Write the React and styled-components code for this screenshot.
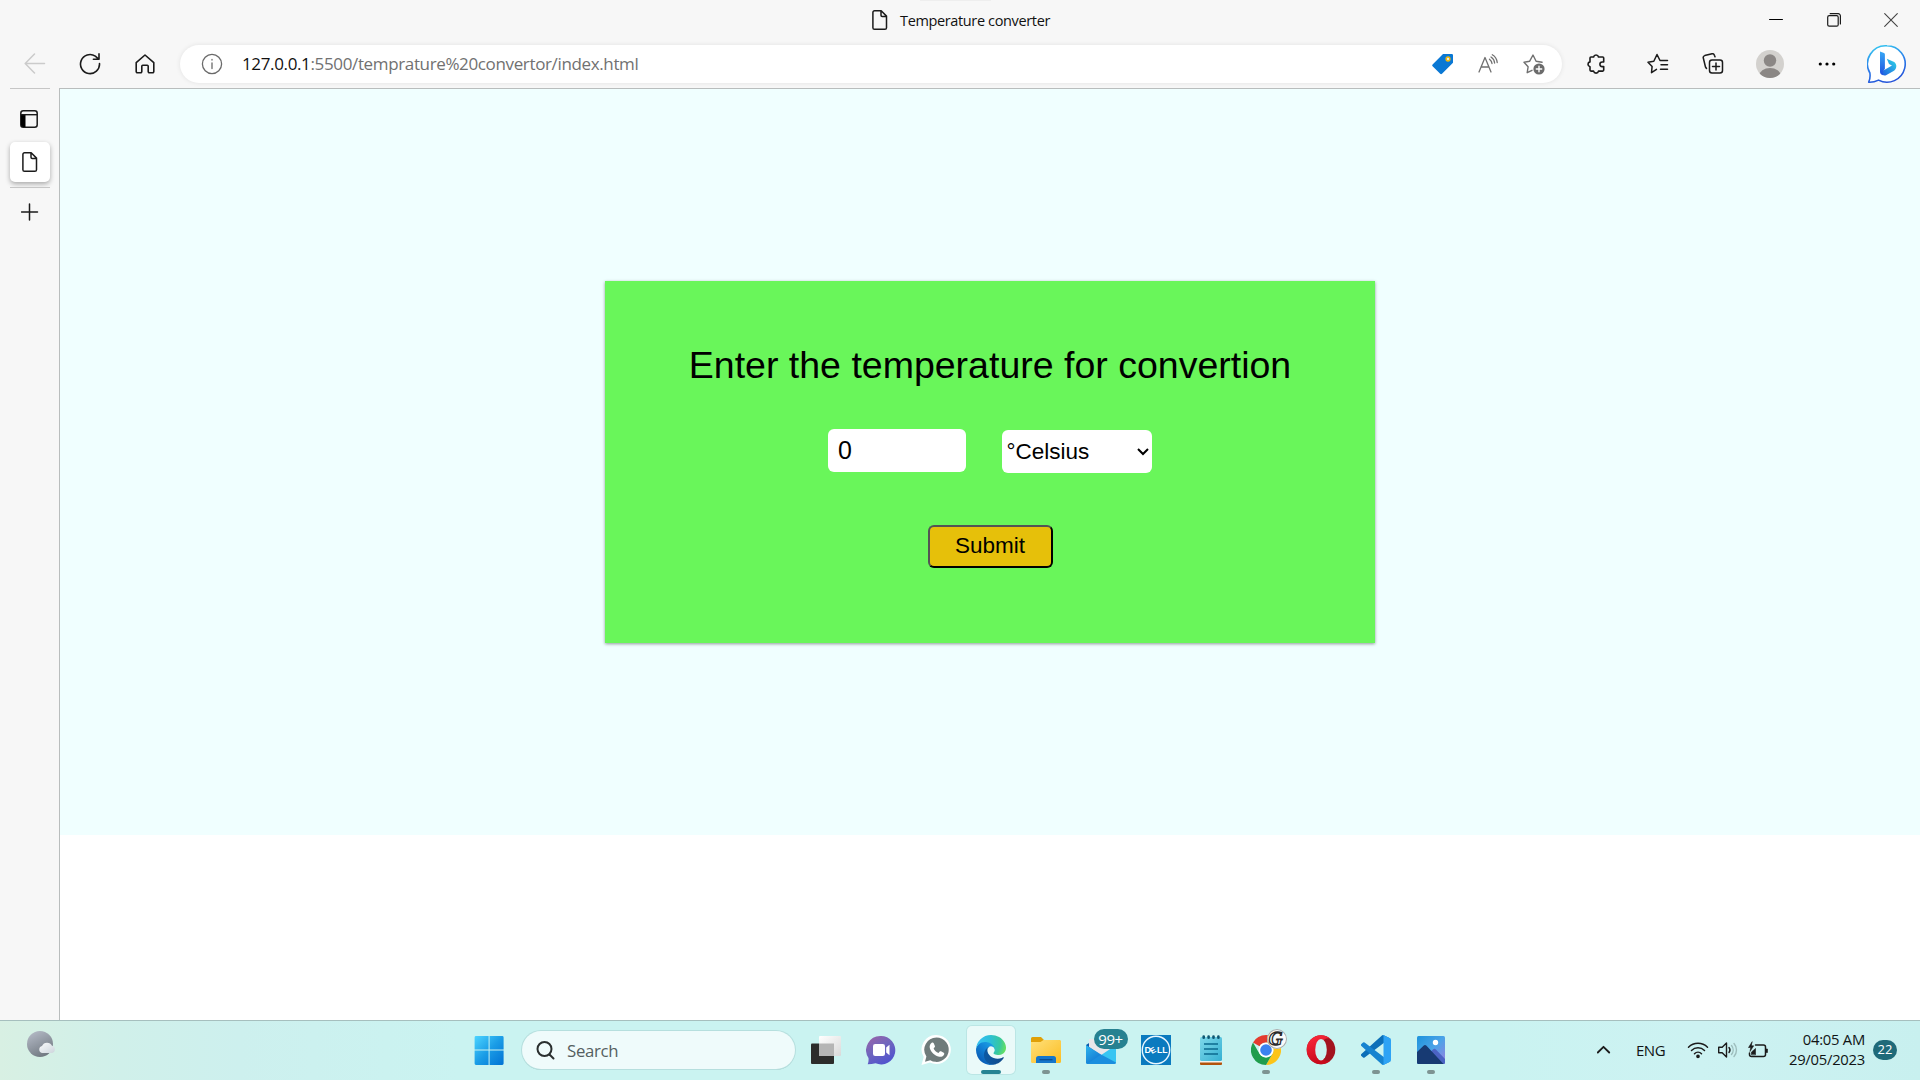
import React from "react";
import styled, { createGlobalStyle } from "styled-components";

const GlobalStyle = createGlobalStyle`
  * { box-sizing: border-box; }
  html, body { margin: 0; padding: 0; }
  body { width: 1920px; height: 1080px; overflow: hidden; background: #fff; }
  svg { display: block; flex: none; }
`;

const ui = `"Open Sans", "Noto Sans", sans-serif`;
const arial = `"Liberation Sans", Arial, sans-serif`;

const Screen = styled.div`
  width: 1920px;
  height: 1080px;
  display: flex;
  flex-direction: column;
  overflow: hidden;
  font-family: ${ui};
`;

/* ---------- browser frame ---------- */

const TitleBar = styled.header`
  height: 45px;
  flex: none;
  display: flex;
  background: linear-gradient(#eeeeee, #eeeeee) 920px 0 / 71px 1px no-repeat, #f7f7f7;
  padding-left: 871px;
`;

const PageTitle = styled.div`
  display: flex;
  align-items: center;
  gap: 11px;
  height: 40px;
  font-size: 14.5px;
  color: #111;
  white-space: nowrap;
  letter-spacing: ${(p) => p.$spacing}px;
`;

const WindowControls = styled.div`
  margin-left: auto;
  display: flex;
  height: 39px;
`;

const Slot = styled.div`
  width: ${(p) => p.$w}px;
  flex: none;
  display: flex;
  align-items: center;
  justify-content: center;
`;

const InfoSlot = styled(Slot)`
  padding-left: 2px;
`;

const Toolbar = styled.nav`
  height: 43px;
  flex: none;
  display: flex;
  background: #f7f7f7;
  padding: 0 0 5px 7px;
`;

const AddressBar = styled.div`
  width: 1382px;
  height: 38px;
  margin: 0 4px 0 8px;
  flex: none;
  display: flex;
  align-items: center;
  border-radius: 19px;
  background: #fff;
  box-shadow: 0 0 5px rgba(0, 0, 0, 0.09);
  padding-right: 5.5px;
`;

const Url = styled.div`
  flex: 1;
  font-size: 17px;
  line-height: 37px;
  height: 38px;
  color: #717171;
  white-space: nowrap;
  letter-spacing: ${(p) => p.$spacing}px;
`;

const Host = styled.span`
  color: #111;
`;

const Divider = styled.div`
  width: 2px;
  height: 20px;
  align-self: center;
  margin-right: 2px;
  background: #d2d2d2;
`;

const Middle = styled.div`
  flex: 1;
  display: flex;
  min-height: 0;
`;

const SideTabs = styled.aside`
  width: 59px;
  flex: none;
  background: #f7f7f7;
  padding: 0 9px 0 10px;
  display: flex;
  flex-direction: column;
`;

const Rule = styled.div`
  height: 1px;
  flex: none;
  background: #c6c6c6;
`;

const SideButton = styled.div`
  height: ${(p) => p.$h}px;
  flex: none;
  display: flex;
  align-items: center;
  justify-content: center;
`;

const PanelToggle = styled(SideButton)`
  padding: 7px 2px 0 0;
`;

const ActiveTab = styled(SideButton)`
  border-radius: 5px;
  background: #fff;
  box-shadow: 0 2px 5px rgba(0, 0, 0, 0.32);
  margin-bottom: 5px;
`;

const Viewport = styled.main`
  flex: 1;
  border-top: 1px solid #b9bdbd;
  border-left: 1px solid #b9bdbd;
  background: #fff;
`;

/* ---------- converter page ---------- */

const Hero = styled.section`
  height: 746px;
  background: #f0ffff;
  display: flex;
  align-items: center;
  justify-content: center;
`;

const Card = styled.form`
  width: 770px;
  height: 362px;
  background: #69f65a;
  box-shadow: 0 1px 3px rgba(0, 0, 0, 0.4);
  padding-top: 63px;
  display: flex;
  flex-direction: column;
  align-items: center;
  font-family: ${arial};
  color: #000;
`;

const Heading = styled.h1`
  margin: 0 0 42px;
  font-size: 37.5px;
  line-height: 43px;
  font-weight: 400;
  white-space: nowrap;
`;

const Fields = styled.div`
  display: flex;
  gap: 36px;
  margin-bottom: 52px;
`;

const Degrees = styled.input`
  width: 138px;
  height: 43px;
  border: 0;
  border-radius: 6px;
  padding: 0 10px;
  background: #fff;
  font: 25px ${arial};
  color: #000;
  outline: none;
`;

const UnitBox = styled.div`
  position: relative;
  width: 150px;
  height: 43px;
  margin-top: 1px;
`;

const Unit = styled.select`
  appearance: none;
  width: 100%;
  height: 100%;
  border: 0;
  border-radius: 6px;
  padding: 0 0 1px 4.5px;
  background: #fff;
  font: 22.5px ${arial};
  color: #000;
`;

const Chevron = styled.svg`
  position: absolute;
  right: 3px;
  top: 17px;
  pointer-events: none;
`;

const Submit = styled.button`
  width: 125px;
  height: 43px;
  padding: 0 0 1px;
  border: 2px solid;
  border-color: #545454 #000 #000 #545454;
  border-radius: 6px;
  background: #e6c00a;
  font: 22.5px ${arial};
  color: #000;
`;

/* ---------- taskbar ---------- */

const Taskbar = styled.footer`
  height: 60px;
  flex: none;
  display: flex;
  border-top: 1px solid #a6bfbe;
  background: linear-gradient(90deg, #d8f0e3 0, #d0f0ea 120px, #cdf0ee 240px, #caf3f1 460px, #caf3f1 1500px, #cdf2f2 1700px, #c8f0ef 1920px);
`;

const Weather = styled.div`
  width: 461px;
  flex: none;
  padding: 10px 0 0 26px;
`;

const AppSlot = styled.div`
  width: 55px;
  height: 48px;
  margin-top: 5px;
  flex: none;
  display: flex;
  justify-content: center;
`;

const Tile = styled.div`
  position: relative;
  width: 48px;
  height: 48px;
  padding-top: 9px;
  border-radius: 5px;
  display: flex;
  flex-direction: column;
  align-items: center;
  gap: 5px;
  background: ${(p) => (p.$active ? "rgba(255,255,255,0.6)" : "transparent")};
  box-shadow: ${(p) => (p.$active ? "0 0 0 1px rgba(160,205,205,0.35)" : "none")};
`;

const Indicator = styled.div`
  width: ${(p) => (p.$active ? 20 : 8)}px;
  height: 4px;
  border-radius: 2px;
  background: ${(p) => (p.$active ? "#268493" : "#7d9392")};
`;

const Count = styled.span`
  position: absolute;
  left: 17px;
  top: 3px;
  width: 34px;
  height: 20px;
  border-radius: 10px;
  background: #268191;
  color: #fff;
  font-size: 15px;
  line-height: 20px;
  letter-spacing: -0.4px;
  text-align: center;
`;

const ProfileBadge = styled.span`
  position: absolute;
  left: 25px;
  top: 3px;
  width: 20px;
  height: 20px;
  border-radius: 50%;
  background: #fafafa;
  box-shadow: inset 0 0 0 1px #a5aeae;
  color: #fff;
  -webkit-text-stroke: 1.3px #2a2a2a;
  font: italic 700 19px/19px "Liberation Serif", serif;
  text-align: center;
  text-indent: -2px;
`;

const SearchBox = styled.div`
  width: 273px;
  height: 38px;
  margin: 10px 3px 0 6px;
  flex: none;
  display: flex;
  align-items: center;
  gap: 12px;
  padding-left: 14px;
  border-radius: 19px;
  background: #effbfb;
  box-shadow: 0 0 0 1px #b6dfde, 0 1px 0 0 #9fbfbe;
  font-size: 16.8px;
  letter-spacing: -0.3px;
  color: #55605f;
`;

const SearchLabel = styled.span`
  padding-top: 1px;
`;

const Tray = styled.div`
  margin-left: auto;
  display: flex;
  align-items: center;
  height: 58px;
  padding-right: 23px;
  color: #101414;
`;

const Language = styled.div`
  width: 30px;
  margin: 0 21px 0 25px;
  font-size: 15px;
  line-height: 20px;
  white-space: nowrap;
  letter-spacing: -0.5px;
`;

const TrayIcons = styled.div`
  display: flex;
  gap: 8px;
`;

const Clock = styled.div`
  width: 96px;
  text-align: right;
  font-size: 14.8px;
  line-height: 20px;
  padding-bottom: 2px;
  white-space: nowrap;
  letter-spacing: ${(p) => p.$spacing}px;
`;

const Notices = styled.div`
  width: 24px;
  height: 20px;
  margin-left: 8px;
  border-radius: 10px;
  background: #1f6a79;
  color: #fff;
  font-size: 13px;
  line-height: 19px;
  text-align: center;
`;

/* ---------- icons ---------- */

const Line = ({ w = 20, h, sw = 1.5, c = "#1b1b1b", children }) => (
  <svg width={w} height={h || w} viewBox={`0 0 ${w} ${h || w}`} fill="none" stroke={c} strokeWidth={sw} strokeLinecap="round" strokeLinejoin="round">
    {children}
  </svg>
);

const DocIcon = () => (
  <Line w={18} h={22} sw={1.5}>
    <path d="M3.5 1.8h6.7l5.3 5.3v11.6a1.6 1.6 0 0 1-1.6 1.6H3.5a1.6 1.6 0 0 1-1.6-1.6V3.4a1.6 1.6 0 0 1 1.6-1.6z M10 2v4.2a1.2 1.2 0 0 0 1.2 1.2h4.2" />
  </Line>
);

const WindowsLogo = () => (
  <svg width="30" height="30" viewBox="0 0 30 30">
    <defs>
      <linearGradient id="win" x1="0" y1="0" x2="1" y2="1" gradientUnits="objectBoundingBox">
        <stop offset="0" stopColor="#4dd4ff" />
        <stop offset=".5" stopColor="#1a9ce6" />
        <stop offset="1" stopColor="#0072d4" />
      </linearGradient>
    </defs>
    <path fill="url(#win)" d="M2 1h12.6v13.6H.6V2.4A1.4 1.4 0 0 1 2 1z M15.6 1h12.6a1.4 1.4 0 0 1 1.4 1.4v12.2h-14z M.6 15.6h14V30H2A1.4 1.4 0 0 1 .6 28.6z M15.6 15.6h14v13a1.4 1.4 0 0 1-1.4 1.4H15.6z" />
  </svg>
);

const TaskViewIcon = () => (
  <svg width="30" height="30" viewBox="0 0 30 30">
    <defs>
      <linearGradient id="tv" x1="0" y1="0" x2="1" y2="1">
        <stop offset="0" stopColor="#fff" />
        <stop offset="1" stopColor="#d9d9d9" />
      </linearGradient>
    </defs>
    <rect x="0" y="8.5" width="23" height="20.5" rx="1" fill="#2c2c2b" />
    <rect x="8" y="1" width="22" height="20" rx="1" fill="url(#tv)" />
    <rect x="8" y="8.5" width="15" height="12.5" fill="#b5b5b5" />
  </svg>
);

const ChatIcon = () => (
  <svg width="30" height="30" viewBox="0 0 30 30">
    <defs>
      <linearGradient id="chat" x1=".1" y1="0" x2=".7" y2="1">
        <stop offset="0" stopColor="#9a63a8" />
        <stop offset=".45" stopColor="#7166bd" />
        <stop offset="1" stopColor="#4f52cf" />
      </linearGradient>
    </defs>
    <path fill="url(#chat)" d="M15 1a14.2 14.2 0 1 1-5.4 27.3c-2.5.7-5.4 1-7.9 1 .9-1.900 1-3.900.8-6.300A14.200 14.200 0 0 1 15 1z" />
    <rect x="7" y="9" width="12" height="12" rx="2.200" fill="#fff" />
    <path fill="#fff" d="M20.200 12.500l3.300-2.800v10.600l-3.300-2.800z" />
  </svg>
);

const WhatsAppIcon = () => (
  <svg width="30" height="30" viewBox="0 0 30 30">
    <path fill="#fff" d="M15.500 0a14.500 14.500 0 1 1-6.600 27.500L.5 30l2.200-8A14.500 14.500 0 0 1 15.500 0z" />
    <path fill="#6f7b7b" d="M15.500 2.500a12.200 12.200 0 1 1-6.200 22.700l-5.300 1.500 1.400-5.200A12.200 12.200 0 0 1 15.500 2.500z" />
    <path fill="#fff" d="M10.700 7.800c.6-.6 1.500-.5 1.900.2l1.300 2.900c.2.500.1 1-.3 1.400l-1 1.100c1 2.100 2.700 3.700 4.900 4.600l1.200-1.400c.3-.4.8-.5 1.300-.3l2.700 1.400c.6.300.7 1 .4 1.800-.8 1.800-2.800 2.700-4.900 2.200-4.800-1.200-8.300-4.500-9.400-8.700-.5-2 .4-3.900 1.900-5.200z" />
  </svg>
);

const EdgeIcon = () => (
  <svg width="30" height="30" viewBox="0 0 256 256">
    <defs>
      <linearGradient id="e1" x1="63" y1="177" x2="241" y2="177" gradientUnits="userSpaceOnUse">
        <stop offset="0" stopColor="#0c59a4" />
        <stop offset="1" stopColor="#114a8b" />
      </linearGradient>
      <linearGradient id="e2" x1="157" y1="100" x2="46" y2="221" gradientUnits="userSpaceOnUse">
        <stop offset="0" stopColor="#1b9de2" />
        <stop offset=".4" stopColor="#1284d8" />
        <stop offset="1" stopColor="#0a5fb8" />
      </linearGradient>
      <radialGradient id="e3" cx="30" cy="60" r="235" gradientUnits="userSpaceOnUse">
        <stop offset="0" stopColor="#35c1f1" />
        <stop offset=".4" stopColor="#2cbfd9" />
        <stop offset=".75" stopColor="#36c8a0" />
        <stop offset="1" stopColor="#6be35a" />
      </radialGradient>
    </defs>
    <path fill="url(#e1)" d="M231 190.500c-3.400 1.800-6.900 3.400-10.500 4.700a101 101 0 0 1-35.600 6.500c-47 0-87.900-32.300-87.900-73.800a31.300 31.300 0 0 1 16.300-27.200c-42.500 1.800-53.400 46.100-53.400 72 0 73.400 67.600 80.800 82.200 80.800 7.800 0 19.700-2.300 26.800-4.600l1.300-.4a128 128 0 0 0 66.500-52.700 4 4 0 0 0-5.700-5.300z" />
    <path fill="url(#e2)" d="M105.700 241.400a79 79 0 0 1-22.700-21.300 80.700 80.700 0 0 1 29.500-120c3.100-1.500 8.500-4.100 15.600-4a32.400 32.400 0 0 1 25.700 13 31.900 31.900 0 0 1 6.300 18.700c0-.2 24.500-79.600-80-79.600-43.900 0-80 41.700-80 78.200a130 130 0 0 0 12.100 56 128 128 0 0 0 156.400 67 75.500 75.500 0 0 1-62.800-8z" />
    <path fill="url(#e3)" d="M152.300 148.900c-.9 1-3.400 2.500-3.400 5.600 0 2.600 1.700 5.200 4.800 7.300 14.400 10.100 41.700 8.700 41.800 8.700a59.600 59.600 0 0 0 30.200-8.300 61.300 61.300 0 0 0 30.400-52.900c.3-22.400-8-37.300-11.300-43.900C223.500 23.900 177.700 0 128 0A128 128 0 0 0 0 126.200c.5-36.500 36.800-66 80-66 3.500 0 23.500.3 42 10 16.300 8.600 24.900 18.900 30.800 29.200 6.200 10.700 7.300 24.100 7.300 29.500 0 5.300-2.700 13.300-7.800 20z" />
  </svg>
);

const FolderIcon = () => (
  <svg width="30" height="30" viewBox="0 0 30 30">
    <defs>
      <linearGradient id="fo" x1="0" y1="0" x2="1" y2="1">
        <stop offset="0" stopColor="#ffe07a" />
        <stop offset="1" stopColor="#fcbd22" />
      </linearGradient>
    </defs>
    <path fill="#e0a008" d="M1.500 2H10l3 3h15.500L30 6.500V12H0V3.500A1.500 1.500 0 0 1 1.500 2z" />
    <path fill="url(#fo)" d="M0 7h9.500l3-2H28.500A1.500 1.500 0 0 1 30 6.500v20a1.500 1.500 0 0 1-1.500 1.500h-27A1.500 1.500 0 0 1 0 26.500z" />
    <path fill="#1476cb" d="M7.500 21H22.500a2.500 2.500 0 0 1 2.500 2.500V28H5v-4.500A2.500 2.500 0 0 1 7.500 21z" />
    <path stroke="#0a4a8c" strokeWidth="1.200" d="M8.500 24.700h13" />
  </svg>
);

const MailIcon = () => (
  <svg width="30" height="30" viewBox="0 0 30 30">
    <defs>
      <linearGradient id="ml" x1="0" y1="0" x2=".6" y2="1">
        <stop offset="0" stopColor="#2fb6ee" />
        <stop offset="1" stopColor="#1277d2" />
      </linearGradient>
    </defs>
    <path fill="#0f58a8" d="M0 10L14 1h2l14 9v8H0z" />
    <path fill="#e9e6ea" d="M3 4h24v11l-11 6L3 12z" />
    <path fill="url(#ml)" d="M0 10l15 9.500V29H1.500A1.500 1.500 0 0 1 0 27.500z" />
    <path fill="#38c5f2" d="M30 10L13 21.500 30 28z" />
    <path fill="#1b8ede" d="M1 29l14-9.500L30 27.500a1.500 1.500 0 0 1-1.500 1.500z" />
  </svg>
);

const DellIcon = () => (
  <svg width="30" height="30" viewBox="0 0 30 30">
    <rect width="30" height="30" fill="#0a7abf" />
    <circle cx="15" cy="15" r="13.700" fill="none" stroke="#eaf7ff" strokeWidth="1.400" />
    <g fill="#fff" fontFamily="Liberation Sans, sans-serif" fontWeight="700" fontSize="9">
      <text x="3.600" y="18.200">D</text>
      <text x="0" y="0" transform="translate(11 18.900) rotate(-30)" fontSize="8">E</text>
      <text x="16" y="18.200" textLength="10.500" lengthAdjust="spacingAndGlyphs">LL</text>
    </g>
  </svg>
);

const NotepadIcon = () => (
  <svg width="30" height="30" viewBox="0 0 30 30">
    <defs>
      <linearGradient id="np" x1="0" y1="0" x2="1" y2="1">
        <stop offset="0" stopColor="#7fd8ea" />
        <stop offset="1" stopColor="#35b0d2" />
      </linearGradient>
    </defs>
    <rect x="4" y="26" width="22" height="4" rx="1" fill="#b2530c" />
    <rect x="4" y="25" width="22" height="2.500" fill="#f2f2ee" />
    <rect x="4" y="2" width="22" height="24" rx="1.500" fill="url(#np)" />
    <path stroke="#0b6a8e" strokeWidth="1.700" d="M8 9h14M8 14h14M8 19h14" />
    <path stroke="#0e5672" strokeWidth="2.600" strokeLinecap="round" d="M7.700 1.600v1.200M12.600 1.600v1.200M17.500 1.600v1.200M22.400 1.600v1.200" />
  </svg>
);

const ChromeIcon = () => (
  <svg width="30" height="30" viewBox="0 0 48 48">
    <path fill="#e33b2e" d="M24 0a24 24 0 0 1 20.800 12H24a12 12 0 0 0-10.400 6L3.200 12A24 24 0 0 1 24 0z" />
    <path fill="#fcc419" d="M44.785 12A24 24 0 0 1 24 48L34.392 30A12 12 0 0 0 34.392 18L24 12z" />
    <path fill="#1f9d4d" d="M3.215 12A24 24 0 0 0 24 48L34.392 30A12 12 0 0 1 13.608 30z" />
    <circle cx="24" cy="24" r="11.800" fill="#fff" />
    <circle cx="24" cy="24" r="9.300" fill="#3b82f0" />
  </svg>
);

const OperaIcon = () => (
  <svg width="30" height="30" viewBox="0 0 30 30">
    <defs>
      <linearGradient id="op" x1="0" y1="0" x2=".3" y2="1">
        <stop offset="0" stopColor="#ff2a3c" />
        <stop offset="1" stopColor="#c80a1c" />
      </linearGradient>
    </defs>
    <ellipse cx="15" cy="14.700" rx="14.300" ry="14.500" fill="#a3121f" />
    <path fill="url(#op)" d="M15 .2C7 .2.700 6.700.700 14.700S7 29.200 15 29.200c3.600 0 6.900-1.300 9.400-3.500-6 1.800-9.500-3.500-9.500-11s3.500-12.800 9.500-11A14.200 14.200 0 0 0 15 .2z" />
    <ellipse cx="15" cy="14.700" rx="5.800" ry="10.800" fill="#caf3f1" />
  </svg>
);

const CodeIcon = () => (
  <svg width="30" height="30" viewBox="0 0 100 100">
    <path fill="#0c6fb8" d="M96.500 10.800L75.900.9a6.200 6.200 0 0 0-7.100 1.200L1.300 63.700a4.200 4.200 0 0 0 0 6.200l5.500 5a4.200 4.200 0 0 0 5.300.2L93.400 13.500c2.700-2.100 6.600-.1 6.600 3.300v-.3a6.300 6.300 0 0 0-3.500-5.700z" />
    <path fill="#1683d0" d="M96.500 89.200l-20.600 9.900a6.200 6.200 0 0 1-7.100-1.200L1.300 36.300a4.200 4.200 0 0 1 0-6.200l5.500-5a4.200 4.200 0 0 1 5.300-.2l81.300 61.600c2.700 2.100 6.600.1 6.600-3.300v.3a6.300 6.300 0 0 1-3.500 5.700z" />
    <path fill="#2ea3f5" d="M75.900 99.100a6.200 6.200 0 0 1-7.100-1.200c2.300 2.300 6.200.7 6.200-2.600V4.700c0-3.300-3.900-4.900-6.200-2.600a6.200 6.200 0 0 1 7.100-1.200l20.600 9.900a6.300 6.300 0 0 1 3.500 5.700v67a6.300 6.300 0 0 1-3.500 5.700z" />
  </svg>
);

const PhotosIcon = () => (
  <svg width="30" height="30" viewBox="0 0 30 30">
    <defs>
      <linearGradient id="ph" x1="0" y1="0" x2="1" y2="1">
        <stop offset="0" stopColor="#1d93dc" />
        <stop offset=".5" stopColor="#4ba3e8" />
        <stop offset="1" stopColor="#9a7fe0" />
      </linearGradient>
      <clipPath id="phc"><rect x="1" y="1" width="28" height="28" rx="1.500" /></clipPath>
    </defs>
    <g clipPath="url(#phc)">
      <rect x="1" y="1" width="28" height="28" fill="url(#ph)" />
      <path fill="#4b63c4" d="M13 18.500l4-4c.900-.900 2-.900 2.900 0L30 25v5H13z" />
      <path fill="#173a73" d="M0 18l7.500-7.300c.900-.900 2.100-.900 3 0L28 29.500H0z" />
      <circle cx="19.500" cy="7.500" r="2.700" fill="#fff" />
    </g>
  </svg>
);

const MoonIcon = () => (
  <svg width="30" height="28" viewBox="0 0 30 28">
    <defs>
      <linearGradient id="mo" x1=".2" y1="0" x2=".7" y2="1">
        <stop offset="0" stopColor="#b4bac6" />
        <stop offset="1" stopColor="#6f777f" />
      </linearGradient>
      <linearGradient id="cl" x1="0" y1="0" x2="1" y2="1">
        <stop offset="0" stopColor="#fafbfc" />
        <stop offset="1" stopColor="#cdd5dc" />
      </linearGradient>
    </defs>
    <circle cx="14" cy="13" r="13" fill="url(#mo)" />
    <path fill="url(#cl)" d="M16 22a3.600 3.600 0 0 1 0-7 5.500 5.500 0 0 1 10-.200A3.700 3.700 0 0 1 26 22z" />
  </svg>
);

const BingIcon = () => (
  <svg width="40" height="40" viewBox="0 0 40 40">
    <defs>
      <linearGradient id="b1" x1=".3" y1="0" x2=".6" y2="1">
        <stop offset="0" stopColor="#35c3f0" />
        <stop offset=".5" stopColor="#2b7de9" />
        <stop offset="1" stopColor="#2350d8" />
      </linearGradient>
      <linearGradient id="b2" x1="0" y1="0" x2="0" y2="1">
        <stop offset="0" stopColor="#37a8f5" />
        <stop offset="1" stopColor="#1f4fe0" />
      </linearGradient>
      <linearGradient id="b3" x1="0" y1="1" x2="1" y2="0">
        <stop offset="0" stopColor="#1f5ae0" />
        <stop offset="1" stopColor="#2fd8e8" />
      </linearGradient>
    </defs>
    <path fill="#fff" stroke="url(#b1)" strokeWidth="1.600" strokeLinejoin="round" d="M20 1.800a18.200 18.200 0 1 1-8.500 34.300c-3 1.500-6 2.300-9.800 2.100 1.500-3 1.600-6 1.200-9.200A18.200 18.200 0 0 1 20 1.800z" />
    <path fill="url(#b3)" d="M19.800 14.700l2.200 5.200 3 1.500-10.800 6.300c.3 2.800 2.200 4.300 4.800 3.600l8-4.500c2.700-2 3.400-6.300.2-8.800z" />
    <path fill="url(#b2)" d="M13 7.500l4 1.600c.5.300.9.800.9 1.500v14.200l-2.300 3.500.4 3c-1.800-.3-3-1.600-3-3.500z" />
  </svg>
);

const apps = [
  { id: "task", icon: <TaskViewIcon /> },
  { id: "chat", icon: <ChatIcon /> },
  { id: "whatsapp", icon: <WhatsAppIcon /> },
  { id: "edge", icon: <EdgeIcon />, active: true, open: true },
  { id: "files", icon: <FolderIcon />, open: true },
  { id: "mail", icon: <MailIcon />, over: <Count>99+</Count> },
  { id: "dell", icon: <DellIcon /> },
  { id: "notes", icon: <NotepadIcon /> },
  { id: "chrome", icon: <ChromeIcon />, open: true, over: <ProfileBadge>G</ProfileBadge> },
  { id: "opera", icon: <OperaIcon /> },
  { id: "code", icon: <CodeIcon />, open: true },
  { id: "photos", icon: <PhotosIcon />, open: true },
];

const TaskApp = ({ icon, active, open, over }) => (
  <AppSlot>
    <Tile $active={active}>
      {icon}
      {open && <Indicator $active={active} />}
      {over}
    </Tile>
  </AppSlot>
);

export default function App() {
  return (
    <Screen>
      <GlobalStyle />
      <TitleBar>
        <PageTitle $spacing={-0.36}>
          <DocIcon />
          Temperature converter
        </PageTitle>
        <WindowControls>
          <Slot $w={57.5}><Line w={14} sw={1.2} c="#000"><path d="M.6 6.500h12.800" /></Line></Slot>
          <Slot $w={57.5}>
            <Line w={14} sw={1.2}>
              <rect x=".7" y="2.700" width="10.500" height="10.500" rx="1.500" />
              <path d="M3.200.7h8a2.200 2.200 0 0 1 2.200 2.200v8" />
            </Line>
          </Slot>
          <Slot $w={57.5}><Line w={14} sw={1.1} c="#444"><path d="M.7.7l12.600 12.600M13.300.7L.7 13.300" /></Line></Slot>
        </WindowControls>
      </TitleBar>

      <Toolbar>
        <Slot $w={55}><Line w={22} c="#cbcbcb"><path d="M20.500 10.500H1.500M10.500 1L1.200 10.500l9.300 9.500" /></Line></Slot>
        <Slot $w={55}>
          <Line w={22} sw={1.6}><path d="M20.500 10.500a9.500 9.500 0 1 1-4.200-7.300l3.400 2.900M20 .9v5.400h-5.600" /></Line>
        </Slot>
        <Slot $w={55}>
          <Line w={20} sw={1.6}><path d="M1.200 8.700L10 1l8.800 7.700v8.800a1.200 1.200 0 0 1-1.200 1.200h-3.200a1.200 1.200 0 0 1-1.200-1.200v-5.200a1 1 0 0 0-1-1H7.800a1 1 0 0 0-1 1v5.200a1.200 1.200 0 0 1-1.200 1.200H2.400a1.200 1.200 0 0 1-1.200-1.200z" /></Line>
        </Slot>
        <AddressBar>
          <InfoSlot $w={62}>
            <Line w={22} sw={1.3} c="#6a6a6a"><circle cx="11" cy="11" r="9.600" /><path d="M11 10v5.500M11 6.500v.5" /></Line>
          </InfoSlot>
          <Url $spacing={-0.36}><Host>127.0.0.1</Host>:5500/temprature%20convertor/index.html</Url>
          <Slot $w={45.5}>
            <svg width="22" height="22" viewBox="0 0 22 22">
              <path fill="#0a78d4" d="M11 1h8.800A1.200 1.200 0 0 1 21 2.200v7.500L10 20.700a1.300 1.300 0 0 1-1.800 0L.6 13.200a1.300 1.300 0 0 1 0-1.800z" />
              <circle cx="16" cy="6" r="1.900" fill="#e6eef5" stroke="#f2b70c" strokeWidth="1.500" />
            </svg>
          </Slot>
          <Slot $w={45.5}>
            <Line w={20} sw={1.3} c="#707070"><path d="M1 18L7 3.500 13 18M3 13h8M11.500 5.200c1.600 1.200 2.300 2.600 2.500 4.300M13 3c2.300 1.500 3.400 3.500 3.600 6M14.300.8c3 1.700 4.600 4.400 4.900 7.700" /></Line>
          </Slot>
          <Slot $w={45.5}>
            <svg width="22" height="22" viewBox="0 0 22 22" fill="none" stroke="#707070" strokeWidth="1.400" strokeLinejoin="round" strokeLinecap="round">
              <path d="M9 17.300l-4.800 2.400.9-5.900L1 9.200l5.700-1L10 2l3.100 6.200 6 1" />
              <circle cx="16" cy="16" r="5.600" fill="#6b6b6b" stroke="none" />
              <path stroke="#fff" d="M16 13.300v5.400M13.300 16h5.400" />
            </svg>
          </Slot>
        </AddressBar>
        <Slot $w={60}>
          <Line w={22} sw={1.6}><path d="M6 4h2.600a2.500 2.500 0 0 1 4.900 0h4.200a1 1 0 0 1 1 1v4h-1.500a2.300 2.300 0 0 0 0 4.600h1.500v3.500a1 1 0 0 1-1 1h-4.200a2.500 2.500 0 0 1-4.900 0H6a1 1 0 0 1-1-1v-3.300a2.500 2.500 0 0 1 0-4.900V5a1 1 0 0 1 1-1z" /></Line>
        </Slot>
        <Divider />
        <Slot $w={60}>
          <Line w={22} sw={1.5}><path d="M9.500 16.300l-5 3.400.6-6.300L1 9.200l5.800-1L10 1.500l3 6h7.500M14 11.700h6.500M13.500 16.200h7" /></Line>
        </Slot>
        <Slot $w={50}>
          <Line w={22} sw={1.5}>
            <rect x="7.500" y="7" width="13" height="13" rx="2.500" />
            <path d="M14 10v7M10.500 13.500h7M4.500 15.500l-1-1.500L1.300 5a2 2 0 0 1 1.400-2.400L10 .8a2 2 0 0 1 2.400 1.400l.6 1.600" />
          </Line>
        </Slot>
        <Slot $w={64}>
          <svg width="28" height="28" viewBox="0 0 28 28">
            <defs><clipPath id="av"><circle cx="14" cy="14" r="14" /></clipPath></defs>
            <g clipPath="url(#av)">
              <rect width="28" height="28" fill="#d3d1ce" />
              <circle cx="14" cy="10.500" r="6.200" fill="#8b8785" />
              <ellipse cx="14" cy="26" rx="10.800" ry="8" fill="#8b8785" />
            </g>
          </svg>
        </Slot>
        <Slot $w={50}>
          <svg width="18" height="6" viewBox="0 0 18 6"><circle cx="2.300" cy="3" r="1.600" /><circle cx="9" cy="3" r="1.600" /><circle cx="15.700" cy="3" r="1.600" /></svg>
        </Slot>
        <Slot $w={70}><BingIcon /></Slot>
      </Toolbar>

      <Middle>
        <SideTabs>
          <Rule />
          <PanelToggle $h={53}>
            <svg width="18" height="18" viewBox="0 0 18 18">
              <rect x=".8" y=".8" width="16.400" height="16.400" rx="2.500" fill="none" stroke="#1b1b1b" strokeWidth="1.500" />
              <path d="M1 4.500h4.500V17H3a2 2 0 0 1-2-2z" />
              <path d="M1 4.700h16" stroke="#1b1b1b" strokeWidth="1.400" />
            </svg>
          </PanelToggle>
          <ActiveTab $h={40}><DocIcon /></ActiveTab>
          <Rule />
          <SideButton $h={48}><Line w={18} sw={1.500}><path d="M8.500 1v16M.5 9h16" /></Line></SideButton>
        </SideTabs>
        <Viewport>
          <Hero>
            <Card onSubmit={(e) => e.preventDefault()}>
              <Heading>Enter the temperature for convertion</Heading>
              <Fields>
                <Degrees defaultValue="0" />
                <UnitBox>
                  <Unit defaultValue="c">
                    <option value="c">°Celsius</option>
                    <option value="f">°Fahrenheit</option>
                  </Unit>
                  <Chevron width="12" height="10" viewBox="0 0 12 10" fill="none" stroke="#000" strokeWidth="2">
                    <path d="M1 2l5 5 5-5" />
                  </Chevron>
                </UnitBox>
              </Fields>
              <Submit type="submit">Submit</Submit>
            </Card>
          </Hero>
        </Viewport>
      </Middle>

      <Taskbar>
        <Weather><MoonIcon /></Weather>
        <AppSlot><Tile><WindowsLogo /></Tile></AppSlot>
        <SearchBox>
          <Line w={19} sw={2} c="#2a2f2f"><circle cx="8.500" cy="8" r="7" /><path d="M13.500 13.500l4 4" /></Line>
          <SearchLabel>Search</SearchLabel>
        </SearchBox>
        {apps.map((a) => <TaskApp key={a.id} {...a} />)}
        <Tray>
          <Line w={14} h={10} sw={1.800}><path d="M.8 7.500L6.500 1.800l5.700 5.700" /></Line>
          <Language>ENG</Language>
          <TrayIcons>
            <Line w={22} h={18} sw={1.500}>
              <path d="M1.500 6.200a13.600 13.600 0 0 1 19 0M4.500 9.500a9.300 9.300 0 0 1 13 0M7.500 12.700a5 5 0 0 1 7 0" />
              <circle cx="11" cy="15.300" r="1.100" fill="#1b1b1b" />
            </Line>
            <Line w={22} h={18} sw={1.400}>
              <path d="M1.700 6.200h3.500L9.500 2v14l-4.300-4.200H1.700zM12 6.500c1.200 1.500 1.200 3.500 0 5" />
              <path stroke="#9dbdbc" d="M14.500 4.500c2.200 2.600 2.200 6.400 0 9M17 2.500c3.300 3.700 3.300 9.300 0 13" />
            </Line>
            <Line w={22} h={18} sw={1.500}>
              <path d="M8.500 4h8a2 2 0 0 1 2 2v7.500a2 2 0 0 1-2 2h-12a2 2 0 0 1-2-2V12" />
              <path fill="#1b1b1b" strokeWidth=".6" d="M4.500 13.500V11l4-3.500v6zM19 8h1.500v3.500H19zM5 1L1.500 6.500h2.200L3 10.500l3.700-5.700H4.500z" />
            </Line>
          </TrayIcons>
          <Clock $spacing={-0.25}>04:05 AM<br />29/05/2023</Clock>
          <Notices>22</Notices>
        </Tray>
      </Taskbar>
    </Screen>
  );
}
